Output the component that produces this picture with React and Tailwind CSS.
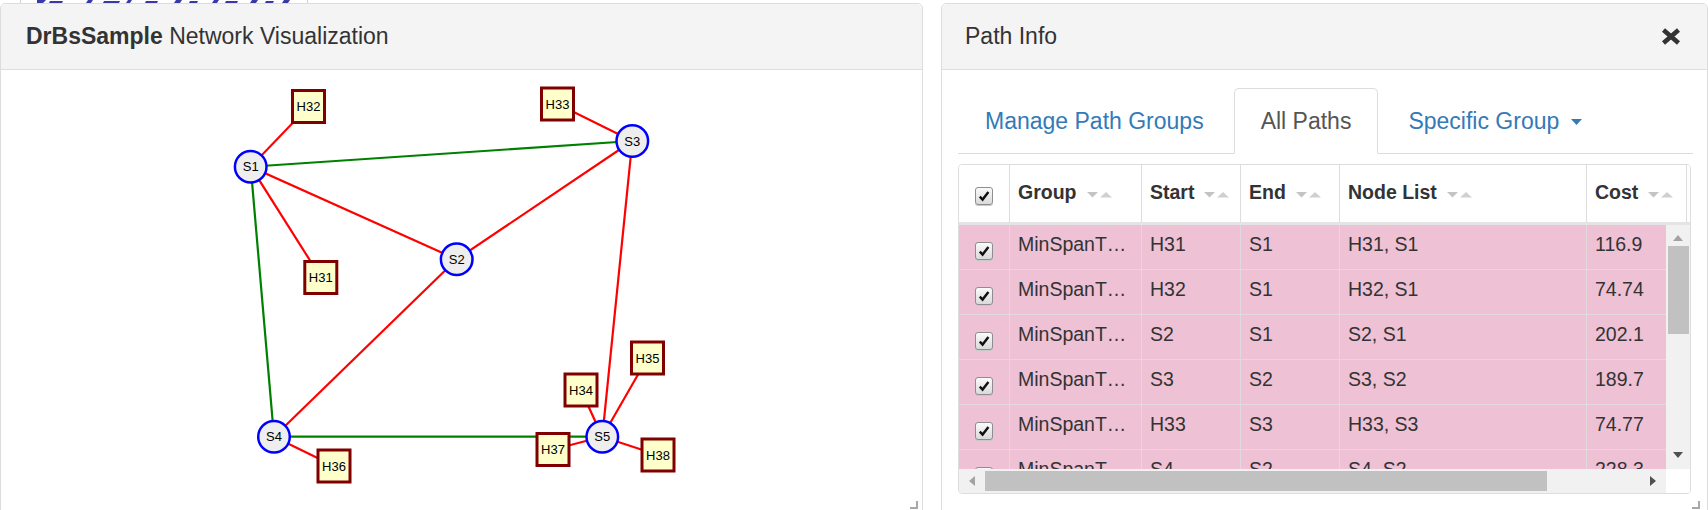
import React from 'react';

const switches = [
  { id: 'S1', x: 250.7, y: 166.7 },
  { id: 'S2', x: 456.7, y: 259.3 },
  { id: 'S3', x: 632.3, y: 141 },
  { id: 'S4', x: 274, y: 436.7 },
  { id: 'S5', x: 602.3, y: 436.7 },
];

const hosts = [
  { id: 'H31', x: 320.8, y: 277.5 },
  { id: 'H32', x: 308.5, y: 106.5 },
  { id: 'H33', x: 557.5, y: 104 },
  { id: 'H34', x: 581, y: 390 },
  { id: 'H35', x: 647.5, y: 358 },
  { id: 'H36', x: 334, y: 466 },
  { id: 'H37', x: 553, y: 449.5 },
  { id: 'H38', x: 658, y: 455 },
];

const edges = [
  ['S1', 'S3', 'green'],
  ['S1', 'S4', 'green'],
  ['S4', 'S5', 'green'],
  ['S1', 'H32', 'red'],
  ['S1', 'H31', 'red'],
  ['S1', 'S2', 'red'],
  ['S2', 'S3', 'red'],
  ['S3', 'H33', 'red'],
  ['S3', 'S5', 'red'],
  ['S2', 'S4', 'red'],
  ['S4', 'H36', 'red'],
  ['S5', 'H34', 'red'],
  ['S5', 'H35', 'red'],
  ['S5', 'H37', 'red'],
  ['S5', 'H38', 'red'],
];

const paths = [
  { start: 'H31', end: 'S1', nodes: 'H31, S1', cost: '116.9' },
  { start: 'H32', end: 'S1', nodes: 'H32, S1', cost: '74.74' },
  { start: 'S2', end: 'S1', nodes: 'S2, S1', cost: '202.1' },
  { start: 'S3', end: 'S2', nodes: 'S3, S2', cost: '189.7' },
  { start: 'H33', end: 'S3', nodes: 'H33, S3', cost: '74.77' },
  { start: 'S4', end: 'S2', nodes: 'S4, S2', cost: '228.3' },
];

const nodeById = {};
[...switches, ...hosts].forEach((n) => (nodeById[n.id] = n));

const SortIcon = () => (
  <svg width="25" height="6" viewBox="0 0 25 6" className="ml-[10px] mt-[3px] shrink-0">
    <path d="M0 0 L11 0 L5.5 5.5 Z" fill="#c4c4c4" />
    <path d="M13 5.5 L25 5.5 L19 0 Z" fill="#d0d0d0" />
  </svg>
);

const CheckBox = () => (
  <div className="w-[18px] h-[18px] rounded-[3px] border border-[#8e8e8e] bg-linear-to-b from-[#fbfbfb] to-[#dadada] flex items-center justify-center shadow-[0_1px_0_#c8c8c8]">
    <svg width="12" height="12" viewBox="0 0 12 12">
      <path d="M1.8 6.6 L4.6 9.6 L10.4 2" stroke="#111" strokeWidth="2.4" fill="none" />
    </svg>
  </div>
);

const ResizeHandle = ({ className }) => (
  <svg width="8" height="8" viewBox="0 0 8 8" className={className}>
    <path d="M7 0 V7 H0" stroke="#a8a8a8" strokeWidth="2" fill="none" />
  </svg>
);

const cols = ['w-[51px]', 'w-[132px]', 'w-[99px]', 'w-[99px]', 'w-[247px]', 'w-[100px]'];

const NetworkPanel = () => (
  <div className="relative w-[923px] h-[520px] shrink-0 rounded-[5px] border border-[#dddddd] bg-white overflow-hidden">
    <div className="h-[66px] bg-[#f4f4f4] border-b border-[#dddddd] flex items-center pl-[25px] text-[23px] text-[#333]">
      <span className="font-bold">DrBsSample</span>
      <span>&nbsp;Network Visualization</span>
    </div>
    <svg width="921" height="450" viewBox="1 70 921 450" className="block">
      {edges.map(([a, b, c], i) => (
        <line
          key={i}
          x1={nodeById[a].x}
          y1={nodeById[a].y}
          x2={nodeById[b].x}
          y2={nodeById[b].y}
          stroke={c === 'green' ? '#008000' : '#ff0000'}
          strokeWidth="2.2"
        />
      ))}
      {switches.map((s) => (
        <g key={s.id}>
          <circle cx={s.x} cy={s.y} r="15.8" fill="#eeeeee" stroke="#0000ff" strokeWidth="2.5" />
          <text
            x={s.x}
            y={s.y + 4.6}
            textAnchor="middle"
            fontSize="13"
            fontFamily="Liberation Sans, Arial, sans-serif"
            fill="#000"
          >
            {s.id}
          </text>
        </g>
      ))}
      {hosts.map((h) => (
        <g key={h.id}>
          <rect x={h.x - 16} y={h.y - 16} width="32" height="32" fill="#ffffcc" stroke="#800000" strokeWidth="3" />
          <text
            x={h.x}
            y={h.y + 4.6}
            textAnchor="middle"
            fontSize="13"
            fontFamily="Liberation Sans, Arial, sans-serif"
            fill="#000"
          >
            {h.id}
          </text>
        </g>
      ))}
    </svg>
    <ResizeHandle className="absolute right-[4px] top-[497px]" />
  </div>
);

const PathGrid = () => (
  <div className="mt-[10px] w-[733px] rounded-[4px] border border-[#dddddd] overflow-hidden text-[19.5px] text-[#333]">
    <div className="flex h-[60px] border-b-[3px] border-[#e4e4e4] bg-white font-bold">
      <div className={`${cols[0]} shrink-0 border-r border-[#dddddd] flex justify-center pt-[22px]`}>
        <CheckBox />
      </div>
      {['Group', 'Start', 'End', 'Node List', 'Cost'].map((h, i) => (
        <div key={h} className={`${cols[i + 1]} shrink-0 border-r border-[#dddddd] flex items-center pl-[8px] pb-[1px]`}>
          <span>{h}</span>
          <SortIcon />
        </div>
      ))}
    </div>
    <div className="flex">
      <div className="w-[707px] h-[244px] overflow-hidden">
        <div className="w-[728px]">
          {paths.map((p, i) => (
            <div key={i} className="flex h-[45px] bg-[#eec1d4] border-b border-[#e2d9dd]">
              <div className={`${cols[0]} shrink-0 border-r border-[#e2d9dd] flex justify-center pt-[17px]`}>
                <CheckBox />
              </div>
              <div className={`${cols[1]} shrink-0 border-r border-[#e2d9dd] pl-[8px] pt-[5px] leading-[28px] whitespace-nowrap overflow-hidden`}>
                MinSpanT…
              </div>
              <div className={`${cols[2]} shrink-0 border-r border-[#e2d9dd] pl-[8px] pt-[5px] leading-[28px]`}>{p.start}</div>
              <div className={`${cols[3]} shrink-0 border-r border-[#e2d9dd] pl-[8px] pt-[5px] leading-[28px]`}>{p.end}</div>
              <div className={`${cols[4]} shrink-0 border-r border-[#e2d9dd] pl-[8px] pt-[5px] leading-[28px]`}>{p.nodes}</div>
              <div className={`${cols[5]} shrink-0 border-r border-[#e2d9dd] pl-[8px] pt-[5px] leading-[28px]`}>{p.cost}</div>
            </div>
          ))}
        </div>
      </div>
      <div className="w-[24px] h-[244px] bg-[#f1f1f1] flex flex-col items-center">
        <svg width="10" height="6" viewBox="0 0 10 6" className="mt-[10px]">
          <path d="M0 6 L10 6 L5 0 Z" fill="#a3a3a3" />
        </svg>
        <div className="mt-[5px] w-[21px] h-[88px] bg-[#c1c1c1] ml-[1px]" />
        <div className="flex-1" />
        <svg width="10" height="6" viewBox="0 0 10 6" className="mb-[11px]">
          <path d="M0 0 L10 0 L5 6 Z" fill="#505050" />
        </svg>
      </div>
    </div>
    <div className="flex h-[24px]">
      <div className="w-[707px] bg-[#f1f1f1] flex items-center">
        <svg width="6" height="10" viewBox="0 0 6 10" className="ml-[10px]">
          <path d="M6 0 L6 10 L0 5 Z" fill="#a3a3a3" />
        </svg>
        <div className="ml-[10px] w-[562px] h-[20px] bg-[#c1c1c1]" />
        <div className="flex-1" />
        <svg width="6" height="10" viewBox="0 0 6 10" className="mr-[10px]">
          <path d="M0 0 L0 10 L6 5 Z" fill="#505050" />
        </svg>
      </div>
      <div className="w-[24px] bg-white" />
    </div>
  </div>
);

const PathPanel = () => (
  <div className="relative w-[767px] h-[520px] shrink-0 rounded-[5px] border border-[#dddddd] bg-white overflow-hidden">
    <div className="h-[66px] bg-[#f4f4f4] border-b border-[#dddddd] flex items-center justify-between pl-[23px] pr-[26px] text-[23px] text-[#333]">
      <span>Path Info</span>
      <svg width="20" height="17" viewBox="0 0 20 17">
        <path d="M2.5 2 L17.5 15 M17.5 2 L2.5 15" stroke="#333" strokeWidth="4.6" fill="none" />
      </svg>
    </div>
    <div className="pt-[18px] pl-[16px] pr-[14px]">
      <div className="flex border-b border-[#dddddd] text-[23px] leading-[31px]">
        <div className="px-[26px] pt-[17px] pb-[15px] mr-[3px] border border-transparent text-[#337ab7] whitespace-nowrap">
          Manage Path Groups
        </div>
        <div className="px-[26px] pt-[17px] pb-[15px] mr-[3px] -mb-px border border-[#dddddd] border-b-white rounded-t-[5px] bg-white text-[#555] whitespace-nowrap">
          All Paths
        </div>
        <div className="px-[26px] pt-[17px] pb-[15px] border border-transparent text-[#337ab7] whitespace-nowrap flex items-center">
          <span>Specific Group</span>
          <svg width="11" height="6" viewBox="0 0 11 6" className="ml-[12px]">
            <path d="M0 0 L11 0 L5.5 6 Z" fill="#337ab7" />
          </svg>
        </div>
      </div>
      <PathGrid />
    </div>
    <ResizeHandle className="absolute right-[7px] top-[497px]" />
  </div>
);

const App = () => {
  return (
    <div className="w-[1708px] h-[510px] overflow-hidden bg-white font-['Liberation_Sans',Arial,sans-serif]">
      <div className="h-[3px] overflow-hidden">
        <svg width="310" height="3" viewBox="0 0 310 3" className="block">
          <line x1="20.5" y1="0" x2="20.5" y2="3" stroke="#d0d0d0" />
          <line x1="307.5" y1="0" x2="307.5" y2="3" stroke="#d0d0d0" />
          <path d="M37 0 h9 l-3 3 h-6 Z M50 1 h13 l-1 2 h-13 Z M88 0 h5 l-2 3 h-5 Z M104 1 h16 l-1 2 h-16 Z M128 0 h4 l-2 3 h-4 Z M146 1 h12 l-1 2 h-12 Z M176 0 h6 l-2 3 h-6 Z M190 1 h8 l-1 2 h-8 Z M214 0 h5 l-2 3 h-5 Z M226 1 h12 l-1 2 h-12 Z M252 0 h6 l-2 3 h-6 Z M266 1 h8 l-1 2 h-8 Z M284 0 h6 l-2 3 h-6 Z" fill="#3a3aa6" />
        </svg>
      </div>
      <div className="flex gap-[18px]">
        <NetworkPanel />
        <PathPanel />
      </div>
    </div>
  );
};

export default App;
